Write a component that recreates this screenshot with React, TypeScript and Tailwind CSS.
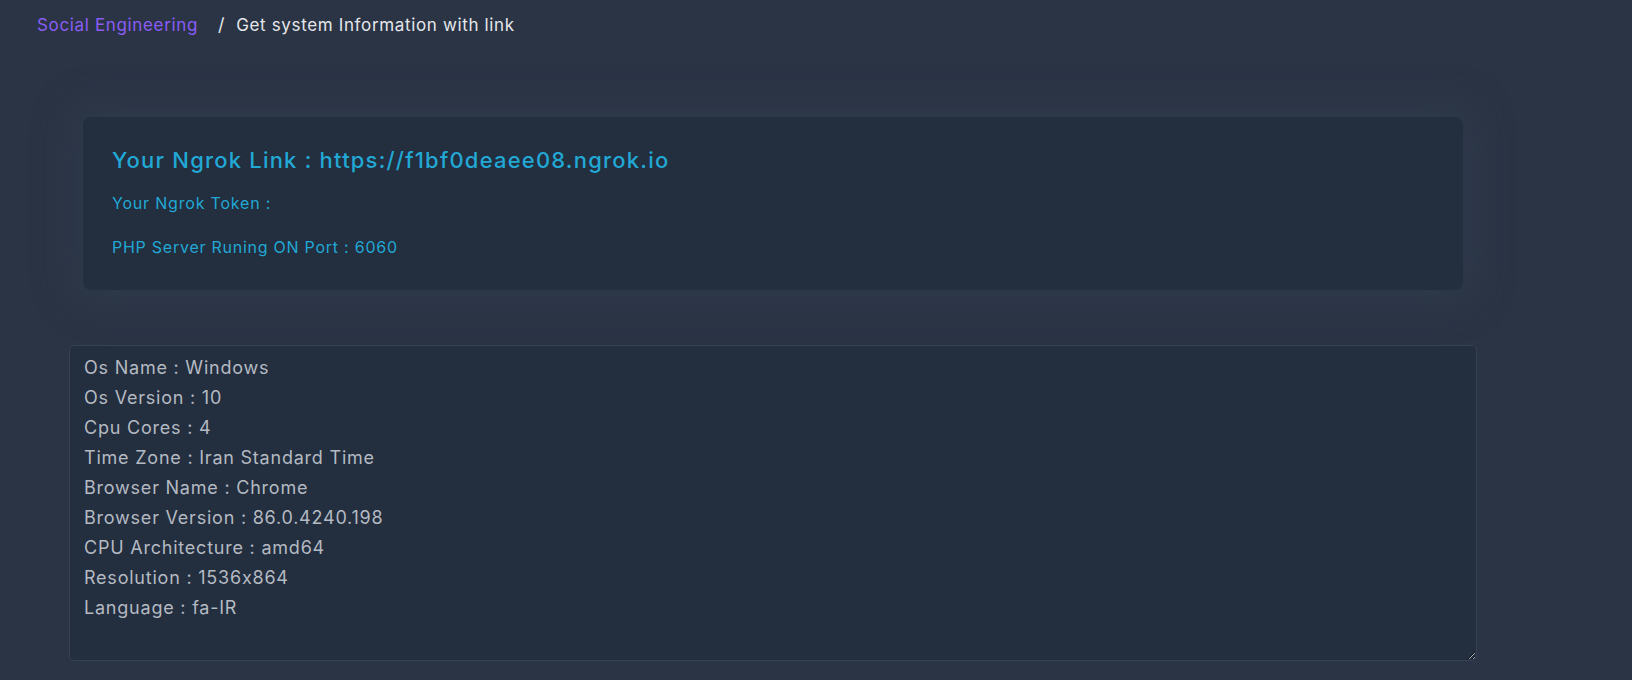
import React from "react";

const info = `Os Name : Windows
Os Version : 10
Cpu Cores : 4
Time Zone : Iran Standard Time
Browser Name : Chrome
Browser Version : 86.0.4240.198
CPU Architecture : amd64
Resolution : 1536x864
Language : fa-IR`;

export default function App() {
  return (
    <div className="min-h-screen w-full bg-[#2a3445] font-['Inter',sans-serif] [font-feature-settings:'calt'_0] pb-[18px]">
      <nav className="flex items-center pl-[37px] pt-[13px] text-[17px] leading-6 tracking-[0.65px]">
        <span className="text-[#8b5cf6]">Social Engineering</span>
        <span className="ml-[20px] mr-[11px] text-lg leading-6 text-[#e5e7eb]">/</span>
        <span className="text-[#e5e7eb]">Get system Information with link</span>
      </nav>
      <div className="ml-[69px] mt-[80px] w-[1408px]">
        <div className="mx-[14px] rounded-lg bg-[#232e3f] pl-[29px] pr-[29px] pt-[29px] pb-[31px] text-[#21a8d4] shadow-[0_0_40px_10px_rgba(56,70,90,0.35)]">
          <h5 className="mb-[17px] text-[22px] font-medium leading-7 tracking-[1.2px]">Your Ngrok Link : https://f1bf0deaee08.ngrok.io</h5>
          <p className="mb-[20px] text-base leading-6 tracking-[0.8px]">Your Ngrok Token :</p>
          <p className="text-base leading-6 tracking-[0.75px]">PHP Server Runing ON Port : 6060</p>
        </div>
        <textarea
          readOnly
          defaultValue={info}
          className="mt-[55px] block h-[316px] w-full rounded-[5px] border border-[#364253] bg-[#232e3f] px-[14px] pt-[7px] pb-[5px] text-lg leading-[30px] tracking-[0.78px] text-[#b4bac2] outline-none font-['Inter',sans-serif] [font-feature-settings:'calt'_0]"
        />
      </div>
    </div>
  );
}
